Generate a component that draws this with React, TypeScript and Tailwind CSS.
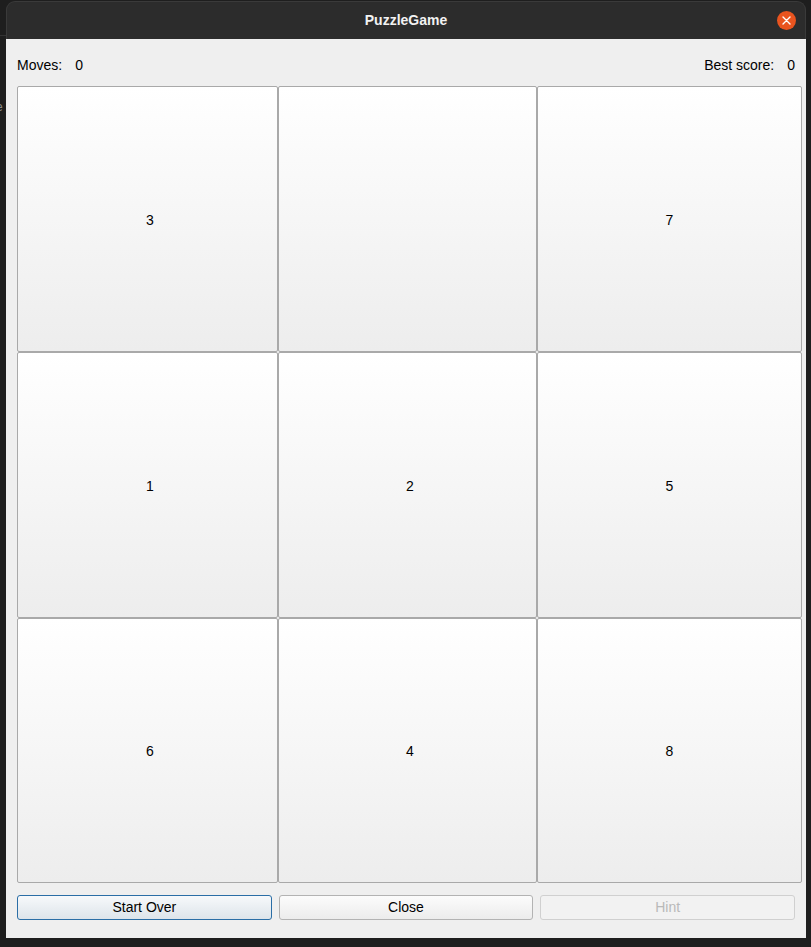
import React from "react";

// ─── Board data ──────────────────────────────────────────────────────────────

const TILES: (number | null)[] = [3, null, 7, 1, 2, 5, 6, 4, 8];

const FONT = { fontFamily: '"Liberation Sans", Arial, sans-serif' };

// ─── Components ──────────────────────────────────────────────────────────────

function Tile({ value, shift }: { value: number | null; shift: boolean }) {
  return (
    <div
      className={`flex items-center justify-center pt-[2px] border border-[#a9a9a9] rounded-[2px] bg-gradient-to-b from-[#ffffff] to-[#ededed] text-[14px] text-black ${
        shift ? "pl-[5px]" : ""
      }`}
    >
      {value ?? ""}
    </div>
  );
}

function TitleBar() {
  return (
    <div className="relative h-[38px] rounded-t-[9px] bg-[#2c2c2c] border-t border-x border-[#3a3a3a] flex items-center justify-center">
      <span className="text-[14px] font-bold text-[#f2f2f2]">PuzzleGame</span>
      <div className="absolute right-[9px] top-[9px] w-[19px] h-[19px] rounded-full bg-[#e9541f] flex items-center justify-center">
        <svg width="9" height="9" viewBox="0 0 9 9">
          <path d="M1 1 L8 8 M8 1 L1 8" stroke="#ffffff" strokeWidth="1.4" strokeLinecap="round" />
        </svg>
      </div>
    </div>
  );
}

function Button({ label, variant }: { label: string; variant: "focus" | "normal" | "disabled" }) {
  const styles = {
    focus: "border-[#2b6ea6] bg-gradient-to-b from-[#f7f9fb] to-[#dde4ea] text-black",
    normal: "border-[#b3b3b3] bg-gradient-to-b from-[#fcfcfc] to-[#ececec] text-black",
    disabled: "border-[#d0d0d0] bg-[#f2f2f2] text-[#b9b9b9]",
  }[variant];
  return (
    <div className={`h-[25px] flex items-center justify-center rounded-[3px] border text-[14px] ${styles}`}>
      {label}
    </div>
  );
}

// ─── Main ────────────────────────────────────────────────────────────────────

export default function App() {
  return (
    <div className="w-[811px] h-[947px] bg-[#1e1e1e] overflow-hidden flex" style={FONT}>
      {/* desktop strip behind the window */}
      <div className="w-[6px] flex flex-col">
        <div className="h-[36px] border-b border-[#333333]" />
        <span className="mt-[62px] -ml-[4px] text-[12px] text-[#8a8a8a]">e</span>
      </div>

      <div className="w-[800px] pt-[1px] flex flex-col">
        <TitleBar />

        <div className="h-[899px] bg-[#efefef] pl-[11px] pr-[4px] flex flex-col">
          {/* score header */}
          <div className="h-[47px] pt-[5px] pr-[7px] flex items-center justify-between text-[14px] text-black">
            <div className="flex gap-[13px]">
              <span>Moves:</span>
              <span>0</span>
            </div>
            <div className="flex gap-[13px]">
              <span>Best score:</span>
              <span>0</span>
            </div>
          </div>

          {/* board */}
          <div className="grid grid-cols-[261px_259px_265px] grid-rows-[266px_266px_265px]">
            {TILES.map((v, i) => (
              <Tile key={i} value={v} shift={i % 3 !== 2} />
            ))}
          </div>

          {/* actions */}
          <div className="mt-[12px] pr-[7px] grid grid-cols-3 gap-[7px]">
            <Button label="Start Over" variant="focus" />
            <Button label="Close" variant="normal" />
            <Button label="Hint" variant="disabled" />
          </div>
        </div>
      </div>
    </div>
  );
}
